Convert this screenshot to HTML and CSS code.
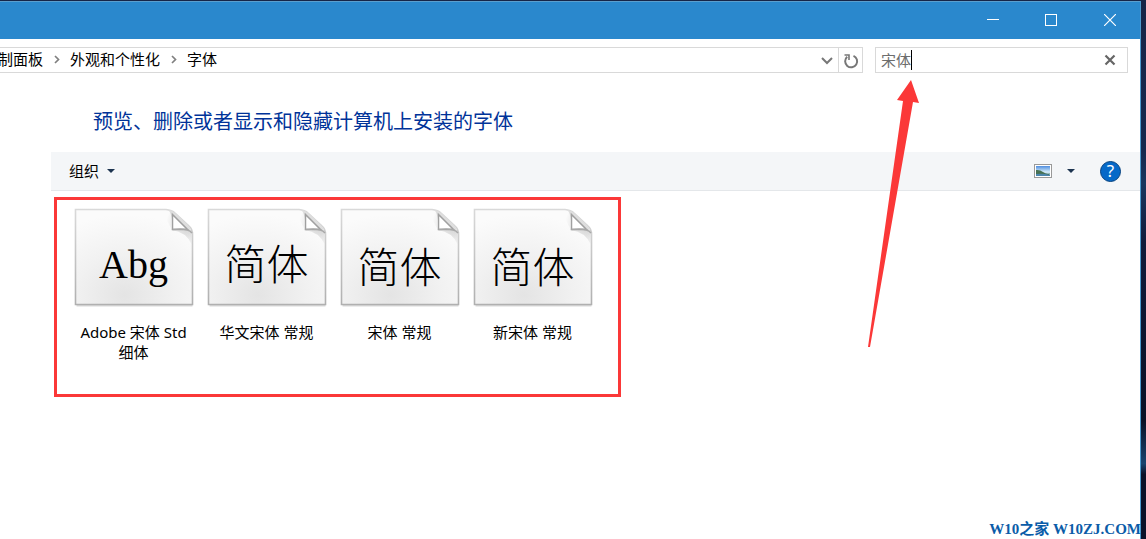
FILE: index.html
```html
<!DOCTYPE html>
<html lang="zh-CN">
<head>
<meta charset="utf-8">
<title>字体</title>
<link rel="stylesheet" href="styles.css">
</head>
<body>
<svg class="defs" width="0" height="0" aria-hidden="true">
  <defs>
    <radialGradient id="paper" cx="0.42" cy="0.9" r="0.85">
      <stop offset="0" stop-color="#e4e4e4"/>
      <stop offset="0.5" stop-color="#f1f1f1"/>
      <stop offset="1" stop-color="#fbfbfb"/>
    </radialGradient>
    <linearGradient id="edge" x1="0" y1="0" x2="0" y2="1">
      <stop offset="0" stop-color="#d9d9d9"/>
      <stop offset="1" stop-color="#b0b0b0"/>
    </linearGradient>
    <radialGradient id="foldshade" cx="0.9" cy="0.4" r="0.7">
      <stop offset="0" stop-color="#999" stop-opacity="0.5"/>
      <stop offset="1" stop-color="#999" stop-opacity="0"/>
    </radialGradient>
    <linearGradient id="sky" x1="0" y1="0" x2="0" y2="1">
      <stop offset="0" stop-color="#4f8ee0"/>
      <stop offset="0.6" stop-color="#d4ecf8"/>
      <stop offset="1" stop-color="#7fa9c4"/>
    </linearGradient>
    <symbol id="page" viewBox="0 0 120 99">
      <path d="M2.500 97.500H118.500" stroke="#000" stroke-opacity=".15" stroke-width="2"/>
      <path d="M1.500 1.500H92Q98 2 101 5L115 18Q118.500 21 118.500 26V96.500H1.500Z" fill="url(#paper)" stroke="url(#edge)" stroke-width="1.600"/>
      <path d="M86 2.500H97V22H117.500V36Q112 24 98 22Q92 10 86 2.500Z" fill="url(#foldshade)"/>
      <path d="M94 2Q98.500 5 98.500 21.500Q114 20 118 25Q117 20 113 16L101 5Q98 2 94 2Z" fill="#dedede"/>
      <path d="M98.500 6.500V21.500H113.500Z" fill="#fff" stroke="#a0a0a0" stroke-width="1.500"/>
      <path d="M98.500 21.500Q114 19.500 118 25" fill="none" stroke="#a8a8a8" stroke-width="1.500"/>
    </symbol>
  </defs>
</svg>
<div class="window">
  <header class="titlebar">
    <button class="caption" aria-label="最小化"><svg width="12" height="12"><path d="M0 5.500H12" stroke="#fff"/></svg></button>
    <button class="caption" aria-label="最大化"><svg width="12" height="12"><rect x=".5" y=".5" width="11" height="11" fill="none" stroke="#fff"/></svg></button>
    <button class="caption" aria-label="关闭"><svg width="12" height="12"><path d="M0 0L12 12M12 0L0 12" stroke="#fff" stroke-width="1.200"/></svg></button>
  </header>

  <div class="navrow">
    <nav class="address" aria-label="地址">
      <a href="#">制面板</a>
      <svg class="sep" width="6" height="9"><path d="M1 1L4.500 4.500L1 8" fill="none" stroke="#808080" stroke-width="1.700"/></svg>
      <a href="#">外观和个性化</a>
      <svg class="sep" width="6" height="9"><path d="M1 1L4.500 4.500L1 8" fill="none" stroke="#808080" stroke-width="1.700"/></svg>
      <a href="#">字体</a>
      <button class="history" aria-label="以前的位置"><svg width="12" height="8"><path d="M1 1L6 6L11 1" fill="none" stroke="#777" stroke-width="2"/></svg></button>
      <button class="refresh" aria-label="刷新"><svg width="16" height="16"><path d="M10.500 2.800A6 6 0 1 1 4.200 3.800" fill="none" stroke="#777" stroke-width="2"/><path d="M1.500 2H6V7" fill="none" stroke="#777" stroke-width="1.600"/></svg></button>
    </nav>
    <div class="search">
      <input type="text" value="宋体" aria-label="搜索"><span class="caret"></span>
      <button class="clear" aria-label="清除"><svg width="12" height="12"><path d="M1.500 1.500L10.500 10.500M10.500 1.500L1.500 10.500" stroke="#666" stroke-width="2.200"/></svg></button>
    </div>
  </div>

  <main class="content">
    <h1>预览、删除或者显示和隐藏计算机上安装的字体</h1>
    <div class="toolbar">
      <button class="organize">组织<svg width="8" height="4"><path d="M0 0H8L4 4Z" fill="#1c3450"/></svg></button>
      <button class="view" aria-label="更改视图">
        <svg width="18" height="14"><rect x=".5" y=".5" width="17" height="13" fill="#fff" stroke="#999"/><rect x="2" y="2" width="14" height="10" fill="url(#sky)"/><path d="M2 6Q6 5.500 9 8T16 9.500L15 11H2Z" fill="#477153"/><path d="M2 10Q9 9 16 11V12H2Z" fill="#4b86ad"/></svg>
      </button>
      <button class="more" aria-label="更多选项"><svg width="8" height="4"><path d="M0 0H8L4 4Z" fill="#1c3450"/></svg></button>
      <button class="help" aria-label="帮助">?</button>
    </div>
    <ul class="fonts">
      <li><div class="thumb"><svg width="120" height="99"><use href="#page"/></svg><span class="sample latin">Abg</span></div><span>Adobe 宋体 Std 细体</span></li>
      <li><div class="thumb"><svg width="120" height="99"><use href="#page"/></svg><span class="sample raised">简体</span></div><span>华文宋体 常规</span></li>
      <li><div class="thumb"><svg width="120" height="99"><use href="#page"/></svg><span class="sample">简体</span></div><span>宋体 常规</span></li>
      <li><div class="thumb"><svg width="120" height="99"><use href="#page"/></svg><span class="sample">简体</span></div><span>新宋体 常规</span></li>
    </ul>
  </main>
</div>
<svg class="arrow" width="54" height="270" aria-hidden="true"><path d="M44 1L52 24L46 23L3 268H1L36 22L30 21Z" fill="#fb3838"/></svg>
<div class="watermark">W10之家 W10ZJ.COM</div>
</body>
</html>
```
FILE: styles.css
```css
* { box-sizing: border-box; }
body {
  margin: 0;
  min-height: 100vh;
  display: flex;
  padding: 1px 5px 0 0;
  position: relative;
  overflow: hidden;
  background: linear-gradient(#162548 0, #15294f 28%, #19365f 34%, #101b3b 45%, #091126 78%, #19446f 86%, #0a1128 88%, #0a1128 100%);
  font: 15px/20px "Noto Sans", "Noto Sans CJK SC", sans-serif;
  color: #000;
}
button {
  display: flex;
  align-items: center;
  justify-content: center;
  padding: 0;
  border: 0;
  background: none;
  font: inherit;
  color: inherit;
}
.defs { position: absolute; }
.window {
  flex: 1;
  min-width: 0;
  background: #fff;
  border-right: 1px solid #4b9bd0;
}
.titlebar {
  display: flex;
  justify-content: flex-end;
  height: 38px;
  padding-bottom: 2px;
  background: #2a88cd;
  border-top: 1px solid #5a9fcf;
}
.caption { width: 58px; }
.caption:last-child { width: 60px; }
.navrow {
  display: flex;
  gap: 12px;
  padding: 8px 12px 0 0;
}
.address {
  flex: 1;
  display: flex;
  align-items: center;
  height: 26px;
  border: 1px solid #d9d9d9;
  border-left: 0;
}
.address a {
  padding-bottom: 2px;
  color: #000;
  text-decoration: none;
}
.address a:first-child { margin-left: -2px; }
.sep { margin: 0 10px 2px 11px; }
.history {
  width: 23px;
  height: 100%;
  padding-top: 2px;
  margin-left: auto;
}
.refresh {
  width: 24px;
  height: 100%;
  padding: 2px 0 0 1px;
  border-left: 1px solid #d9d9d9;
}
.search {
  display: flex;
  align-items: center;
  width: 253px;
  height: 26px;
  padding-left: 5px;
  border: 1px solid #d9d9d9;
}
.search input {
  width: 30px;
  padding: 0;
  border: 0;
  outline: 0;
  font: inherit;
  color: #6d6d6d;
}
.caret {
  width: 1px;
  height: 20px;
  background: #000;
}
.clear {
  width: 34px;
  height: 100%;
  margin-left: auto;
}
.content { padding: 35px 0 0 51px; }
h1 {
  margin: 0 0 16px 42px;
  font-size: 20px;
  line-height: 28px;
  font-weight: 400;
  color: #003399;
}
.toolbar {
  display: flex;
  align-items: center;
  height: 39px;
  padding: 0 19px 0 18px;
  background: #f4f6f8;
  border-bottom: 1px solid #e4e7ea;
}
.organize {
  gap: 8px;
  margin-right: auto;
}
.more { margin: 0 25px 0 15px; }
.help {
  width: 21px;
  height: 21px;
  border: 1px solid #06427f;
  border-radius: 50%;
  background: #0669c8;
  color: #fff;
  font-size: 17px;
  line-height: 18px;
}
.fonts {
  display: inline-flex;
  height: 200px;
  margin: 6px 0 0 3px;
  padding: 8px 19px 0 10px;
  border: 3px solid #fb3838;
  list-style: none;
}
.fonts li {
  width: 133px;
  padding: 0 8px;
  text-align: center;
}
.thumb {
  display: grid;
  justify-items: center;
  align-items: center;
  margin: 0 -2px 15px;
}
.thumb > * { grid-area: 1 / 1; }
.sample {
  padding-top: 14px;
  font-family: "Noto Sans CJK SC", sans-serif;
  font-weight: 300;
  font-size: 42px;
  line-height: 56px;
}
.sample.raised { padding-top: 8px; }
.sample.latin {
  font-family: "Liberation Serif", serif;
  font-size: 40px;
}
.arrow {
  position: absolute;
  top: 79px;
  right: 225px;
}
.watermark {
  position: absolute;
  right: 5px;
  bottom: 0;
  font: bold 15px/20px "Liberation Serif", "Noto Sans CJK SC", serif;
  color: #0b5ca8;
}
```
